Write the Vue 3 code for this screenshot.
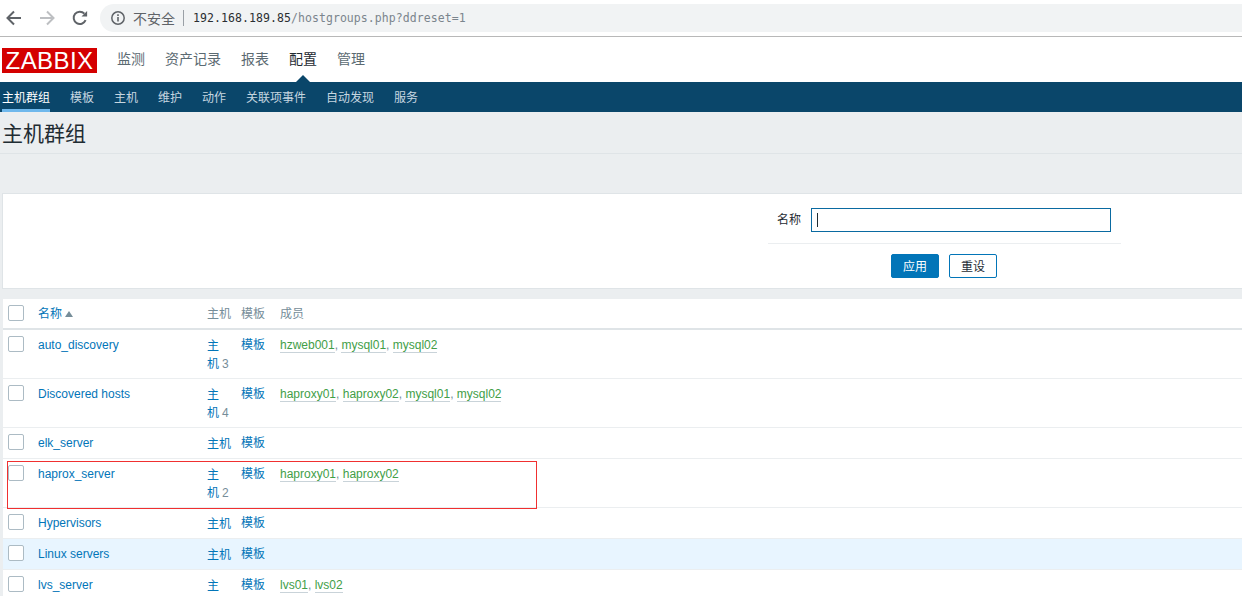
<script setup>
const topNav = [
  { label: '监测' }, { label: '资产记录' }, { label: '报表' }, { label: '配置', active: true }, { label: '管理' }
]
const subNav = ['主机群组', '模板', '主机', '维护', '动作', '关联项事件', '自动发现', '服务']
const rows = [
  { name: 'auto_discovery', count: 3, members: ['hzweb001', 'mysql01', 'mysql02'] },
  { name: 'Discovered hosts', count: 4, members: ['haproxy01', 'haproxy02', 'mysql01', 'mysql02'] },
  { name: 'elk_server', members: [] },
  { name: 'haprox_server', count: 2, members: ['haproxy01', 'haproxy02'] },
  { name: 'Hypervisors', members: [] },
  { name: 'Linux servers', members: [], hover: true },
  { name: 'lvs_server', cut: true, members: ['lvs01', 'lvs02'] }
]
</script>

<template>
  <div class="page">
    <div class="chrome">
      <svg class="ico" width="18" height="18" viewBox="0 0 18 18"><path d="M16 9H3M9 2.5 2.5 9 9 15.5" fill="none" stroke="#5f6368" stroke-width="2"/></svg>
      <svg class="ico fwd" width="18" height="18" viewBox="0 0 18 18"><path d="M2 9h13M9 2.5 15.5 9 9 15.5" fill="none" stroke="#bdbfc2" stroke-width="2"/></svg>
      <svg class="ico rel" width="18" height="18" viewBox="0 0 18 18"><path d="M14.6 11.2A6.2 6.2 0 1 1 13.4 4.6" fill="none" stroke="#5f6368" stroke-width="2"/><path d="M10.5 7.5h5.6V2z" fill="#5f6368"/></svg>
      <div class="omni">
        <svg width="16" height="16" viewBox="0 0 16 16"><circle cx="8" cy="8" r="6.2" fill="none" stroke="#5f6368" stroke-width="1.5"/><path d="M7.2 7h1.6v4.6H7.2zM7.2 4.3h1.6v1.6H7.2z" fill="#5f6368"/></svg>
        <span class="insecure">不安全</span>
        <span class="sep"></span>
        <span class="url"><b>192.168.189.85</b>/hostgroups.php?ddreset=1</span>
      </div>
    </div>

    <header class="topnav">
      <div class="logo">ZABBIX</div>
      <nav class="main-links">
        <span v-for="n in topNav" :key="n.label" class="main-link" :class="{ on: n.active }">{{ n.label }}</span>
      </nav>
    </header>

    <nav class="subnav">
      <span v-for="(s, i) in subNav" :key="s" class="sub-link" :class="{ on: i === 0 }">{{ s }}</span>
    </nav>

    <h1 class="title">主机群组</h1>

    <section class="filter">
      <div class="filter-row">
        <label class="filter-label">名称</label>
        <div class="filter-input"><i class="caret"></i></div>
      </div>
      <div class="filter-actions">
        <button class="btn primary">应用</button>
        <button class="btn ghost">重设</button>
      </div>
    </section>

    <section class="table">
      <div class="row head">
        <div class="c-check"><span class="box"></span></div>
        <div class="c-name"><span class="link">名称</span><i class="arrow"></i></div>
        <div class="c-hosts">主机</div>
        <div class="c-tpl">模板</div>
        <div class="c-members">成员</div>
      </div>
      <div v-for="r in rows" :key="r.name" class="row" :class="{ hover: r.hover, tall: r.count || r.cut }">
        <div class="c-check"><span class="box"></span></div>
        <div class="c-name"><span class="link">{{ r.name }}</span></div>
        <div class="c-hosts">
          <template v-if="r.count">
            <span class="link">主</span><wbr><span class="unit"><span class="link">机</span><span class="count">{{ r.count }}</span></span>
          </template>
          <span v-else-if="r.cut" class="link">主</span>
          <span v-else class="link">主机</span>
        </div>
        <div class="c-tpl"><span class="link">模板</span></div>
        <div class="c-members">
          <template v-for="(m, i) in r.members" :key="m">
            <span class="member">{{ m }}</span><span v-if="i < r.members.length - 1" class="comma">, </span>
          </template>
        </div>
      </div>
      <div class="mark"></div>
    </section>
  </div>
</template>

<style>
html, body { margin: 0; overflow: hidden; background: #ebeef0; }
</style>

<style scoped>
.page {
  width: 1242px;
  height: 596px;
  overflow: hidden;
  background: #ebeef0;
  font-family: Arial, "Liberation Sans", "Noto Sans CJK SC", sans-serif;
  font-size: 12px;
  color: #1f2c33;
}
.chrome {
  height: 36px;
  background: #fff;
  border-bottom: 1px solid #b8b8b8;
  display: flex;
  align-items: center;
  padding-left: 5px;
}
.ico { flex: none; }
.fwd { margin-left: 15px; }
.rel { margin-left: 15px; margin-top: -1px; }
.omni {
  margin-left: 11px;
  margin-top: -1px;
  flex: 1;
  height: 28px;
  background: #f1f3f4;
  border-radius: 14px 0 0 14px;
  display: flex;
  align-items: center;
  padding-left: 10px;
}
.insecure { margin-left: 7px; font-size: 14px; color: #5f6368; }
.sep { width: 1px; height: 16px; background: #9aa0a6; margin: 0 9px 0 8px; }
.url { font-family: "DejaVu Sans Mono", "Liberation Mono", monospace; font-size: 11.5px; letter-spacing: 0.07px; color: #7b858d; }
.url b { font-weight: 400; color: #2a2e31; }

.topnav {
  height: 45px;
  background: #fff;
  display: flex;
  align-items: center;
}
.logo {
  margin-left: 2px;
  margin-top: 1px;
  width: 95px;
  height: 25px;
  background: #d40000;
  color: #fff;
  font-size: 24px;
  line-height: 25px;
  text-align: center;
  letter-spacing: 0.4px;
}
.main-links { display: flex; margin-left: 10px; margin-top: -2px; }
.main-link {
  position: relative;
  padding: 0 10px;
  font-size: 14px;
  line-height: 20px;
  color: #5b6a72;
}
.main-link.on { color: #1f2c33; }
.main-link.on::after {
  content: "";
  position: absolute;
  left: 50%;
  bottom: -14px;
  margin-left: -8px;
  border: 8px solid transparent;
  border-top-width: 0;
  border-bottom-color: #0a466a;
}
.subnav {
  height: 30px;
  background: #0a466a;
  display: flex;
  align-items: stretch;
  padding-left: 2px;
  gap: 20px;
}
.sub-link {
  font-size: 12px;
  line-height: 32px;
  color: #c6d6e0;
}
.sub-link.on {
  color: #fff;
  height: 27px;
  border-bottom: 3px solid #6fb8ec;
}
.title {
  margin: 0;
  height: 41px;
  padding-left: 2px;
  border-bottom: 1px solid #dfe4e7;
  font-size: 21px;
  font-weight: 400;
  line-height: 43px;
  box-sizing: content-box;
  color: #1f2c33;
}
.filter {
  margin: 39px 0 0 2px;
  height: 94px;
  background: #fff;
  border: 1px solid #dfe4e7;
  border-right: 0;
  position: relative;
}
.filter-row {
  position: relative;
  margin-left: 765px;
  width: 353px;
  height: 35px;
  padding-top: 14px;
  border-bottom: 1px solid #ebeef0;
  display: flex;
}
.filter-label { width: 33px; text-align: right; line-height: 24px; color: #1f2c33; }
.filter-input {
  margin-left: 10px;
  width: 293px;
  height: 22px;
  border: 1px solid #0a6aa1;
  display: flex;
  align-items: center;
  padding-left: 5px;
}
.caret { width: 1px; height: 14px; background: #1f2c33; }
.filter-actions {
  display: flex;
  gap: 10px;
  margin-left: 888px;
  margin-top: 10px;
}
.btn {
  box-sizing: border-box;
  width: 48px;
  height: 24px;
  padding: 2px 0 0;
  border-radius: 2px;
  border: 1px solid #0275b8;
  font: inherit;
  line-height: 20px;
}
.primary { background: #0275b8; color: #fff; }
.ghost { background: #fff; color: #1f2c33; }

.table {
  position: relative;
  margin: 10px 0 0 3px;
  background: #fff;
}
.row {
  display: flex;
  height: 30px;
  border-bottom: 1px solid #ebeef0;
  line-height: 16px;
  box-sizing: content-box;
}
.row.tall { height: 48px; }
.row.hover { background: #e8f5ff; }
.row.head { height: 29px; border-bottom: 2px solid #dfe4e7; color: #768d99; }
.row > div { padding-top: 7px; box-sizing: border-box; }
.c-check { width: 35px; padding-left: 5px; }
.c-name { width: 169px; }
.c-hosts { width: 34px; padding-right: 2px; color: #768d99; line-height: 18px; }
.row.head .c-hosts { line-height: 16px; }
.c-tpl { width: 39px; }
.c-members { flex: 1; }
.box {
  display: block;
  box-sizing: border-box;
  width: 16px;
  height: 16px;
  background: #fff;
  border: 1px solid #acbbc4;
  border-radius: 2px;
  margin-top: -1px;
}
.link { color: #0275b8; }
.arrow {
  display: inline-block;
  margin-left: 3px;
  border: 4px solid transparent;
  border-top-width: 0;
  border-bottom: 6px solid #768d99;
  vertical-align: 1px;
}
.unit { white-space: nowrap; }
.count { color: #768d99; margin-left: 3px; }
.member { color: #429e47; border-bottom: 1px solid #c9d3d9; }
.comma { color: #768d99; }
.mark {
  position: absolute;
  left: 4px;
  top: 162px;
  width: 528px;
  height: 46px;
  border: 1px solid #f03030;
}
</style>
